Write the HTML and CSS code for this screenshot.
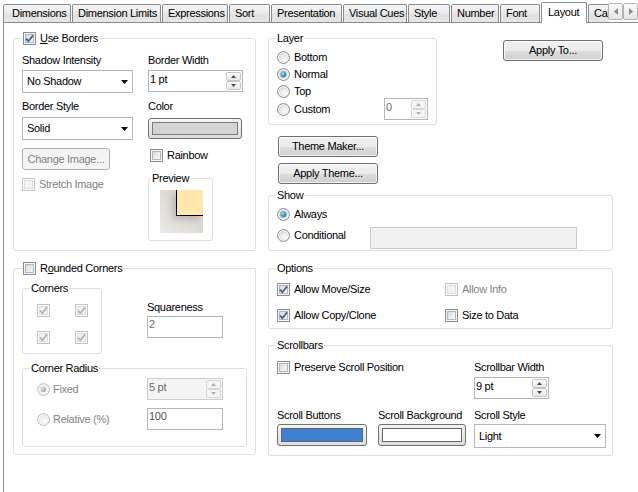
FILE: index.html
```html
<!DOCTYPE html>
<html>
<head>
<meta charset="utf-8">
<title>Layout</title>
<link rel="stylesheet" href="styles.css">
</head>
<body>
<div class="tabbar">
  <div class="tabs">
    <div class="tab t-dim">Dimensions</div>
    <div class="tab t-lim">Dimension Limits</div>
    <div class="tab t-exp">Expressions</div>
    <div class="tab t-sort">Sort</div>
    <div class="tab t-pres">Presentation</div>
    <div class="tab t-vc">Visual Cues</div>
    <div class="tab t-style">Style</div>
    <div class="tab t-num">Number</div>
    <div class="tab t-font">Font</div>
    <div class="tab active t-lay">Layout</div>
    <div class="tab t-cap">Caption</div>
  </div>
  <div class="tabscroll">
    <div class="sbtn"><svg width="4" height="7" viewBox="0 0 4 7"><path d="M4 0V7L0 3.5Z" fill="#8a8a8a"/></svg></div>
    <div class="sbtn"><svg width="4" height="7" viewBox="0 0 4 7"><path d="M0 0V7L4 3.5Z" fill="#8a8a8a"/></svg></div>
  </div>
</div>

<div class="panel">
  <div class="col col-left">
    <div class="group g-borders">
      <div class="legend chk"><span class="cb"><svg width="11" height="11" viewBox="0 0 11 11"><path d="M2 5.6L4.4 8.2L9 2.4" class="tick"/></svg></span><span><u>U</u>se Borders</span></div>
      <div class="ub-body">
        <div class="ub-col1">
          <div class="lbl">Shadow Intensity</div>
          <div class="select sel-shadow"><span>No Shadow</span><svg class="arrow" width="7" height="4" viewBox="0 0 7 4"><path d="M0 0H7L3.5 4Z"/></svg></div>
          <div class="lbl lbl-style">Border Style</div>
          <div class="select sel-style"><span>Solid</span><svg class="arrow" width="7" height="4" viewBox="0 0 7 4"><path d="M0 0H7L3.5 4Z"/></svg></div>
          <div class="btn dis btn-change">Change Image...</div>
          <div class="check dis chk-stretch"><span class="cb dis"></span>Stretch Image</div>
        </div>
        <div class="ub-col2">
          <div class="lbl">Border Width</div>
          <div class="spin spin-bw">
            <span class="val">1 pt</span>
            <span class="spbtns">
              <span class="sb"><svg width="5" height="3" viewBox="0 0 5 3"><path d="M0 3H5L2.5 0Z"/></svg></span>
              <span class="sb"><svg width="5" height="3" viewBox="0 0 5 3"><path d="M0 0H5L2.5 3Z"/></svg></span>
            </span>
          </div>
          <div class="lbl lbl-color">Color</div>
          <div class="colorbtn color-border"><div class="sw sw-gray"></div></div>
          <div class="check chk-rainbow"><span class="cb"></span>Rainbow</div>
          <div class="group g-preview">
            <div class="legend lg-preview">Preview</div>
            <div class="pv-img"><div class="pv-square"></div></div>
          </div>
        </div>
      </div>
    </div>

    <div class="group g-rounded">
      <div class="legend chk"><span class="cb"></span><span>R<u>o</u>unded Corners</span></div>
      <div class="rc-top">
        <div class="group g-corners">
          <div class="legend">Corners</div>
          <div class="corner-grid">
            <span class="cb dis"><svg width="11" height="11" viewBox="0 0 11 11"><path d="M2 5.6L4.4 8.2L9 2.4" class="tick"/></svg></span>
            <span class="cb dis"><svg width="11" height="11" viewBox="0 0 11 11"><path d="M2 5.6L4.4 8.2L9 2.4" class="tick"/></svg></span>
            <span class="cb dis"><svg width="11" height="11" viewBox="0 0 11 11"><path d="M2 5.6L4.4 8.2L9 2.4" class="tick"/></svg></span>
            <span class="cb dis"><svg width="11" height="11" viewBox="0 0 11 11"><path d="M2 5.6L4.4 8.2L9 2.4" class="tick"/></svg></span>
          </div>
        </div>
        <div class="sq-col">
          <div class="lbl">Squareness</div>
          <div class="input sq-input">2</div>
        </div>
      </div>
      <div class="group g-radius">
        <div class="legend">Corner Radius</div>
        <div class="rad-row r-fixed">
          <div class="radio dis"><span class="rb on dis"></span>Fixed</div>
          <div class="spin dis spin-r">
            <span class="val">5 pt</span>
            <span class="spbtns">
              <span class="sb"><svg width="5" height="3" viewBox="0 0 5 3"><path d="M0 3H5L2.5 0Z"/></svg></span>
              <span class="sb"><svg width="5" height="3" viewBox="0 0 5 3"><path d="M0 0H5L2.5 3Z"/></svg></span>
            </span>
          </div>
        </div>
        <div class="rad-row r-rel">
          <div class="radio dis"><span class="rb dis"></span>Relative (%)</div>
          <div class="input rel-input">100</div>
        </div>
      </div>
    </div>
  </div>

  <div class="col col-right">
    <div class="top-row">
      <div class="group g-layer">
        <div class="legend">Layer</div>
        <div class="layer-list">
          <div class="radio lrow"><span class="rb"></span>Bottom</div>
          <div class="radio lrow"><span class="rb on"></span>Normal</div>
          <div class="radio lrow"><span class="rb"></span>Top</div>
          <div class="lrow-custom">
            <div class="radio"><span class="rb"></span>Custom</div>
            <div class="spin dis spin-custom">
              <span class="val">0</span>
              <span class="spbtns">
                <span class="sb"><svg width="5" height="3" viewBox="0 0 5 3"><path d="M0 3H5L2.5 0Z"/></svg></span>
                <span class="sb"><svg width="5" height="3" viewBox="0 0 5 3"><path d="M0 0H5L2.5 3Z"/></svg></span>
              </span>
            </div>
          </div>
        </div>
      </div>
      <div class="btn btn-apply">Apply To...</div>
    </div>
    <div class="btn btn-theme">Theme Maker...</div>
    <div class="btn btn-theme2">Apply Theme...</div>

    <div class="group g-show">
      <div class="legend">Show</div>
      <div class="radio show-always"><span class="rb on"></span>Always</div>
      <div class="show-cond">
        <div class="radio"><span class="rb"></span>Conditional</div>
        <div class="cond-input"></div>
      </div>
    </div>

    <div class="group g-options">
      <div class="legend">Options</div>
      <div class="opt-grid">
        <div class="check"><span class="cb"><svg width="11" height="11" viewBox="0 0 11 11"><path d="M2 5.6L4.4 8.2L9 2.4" class="tick"/></svg></span>Allow Move/Size</div>
        <div class="check dis"><span class="cb dis"></span>Allow Info</div>
        <div class="check"><span class="cb"><svg width="11" height="11" viewBox="0 0 11 11"><path d="M2 5.6L4.4 8.2L9 2.4" class="tick"/></svg></span>Allow Copy/Clone</div>
        <div class="check"><span class="cb"></span>Size to Data</div>
      </div>
    </div>

    <div class="group g-scroll">
      <div class="legend">Scrollbars</div>
      <div class="scroll-grid">
        <div class="check preserve"><span class="cb"></span>Preserve Scroll Position</div>
        <div class="cell">
          <div class="lbl">Scrollbar Width</div>
          <div class="spin spin-sw">
            <span class="val">9 pt</span>
            <span class="spbtns">
              <span class="sb"><svg width="5" height="3" viewBox="0 0 5 3"><path d="M0 3H5L2.5 0Z"/></svg></span>
              <span class="sb"><svg width="5" height="3" viewBox="0 0 5 3"><path d="M0 0H5L2.5 3Z"/></svg></span>
            </span>
          </div>
        </div>
        <div class="cell">
          <div class="lbl">Scroll Buttons</div>
          <div class="colorbtn cb-buttons"><div class="sw sw-blue"></div></div>
        </div>
        <div class="cell">
          <div class="lbl">Scroll Background</div>
          <div class="colorbtn cb-bg"><div class="sw sw-white"></div></div>
        </div>
        <div class="cell">
          <div class="lbl">Scroll Style</div>
          <div class="select sel-scroll"><span>Light</span><svg class="arrow" width="7" height="4" viewBox="0 0 7 4"><path d="M0 0H7L3.5 4Z"/></svg></div>
        </div>
      </div>
    </div>
  </div>
</div>
</body>
</html>
```

FILE: styles.css
```css
* { box-sizing: border-box; }

html, body {
  margin: 0;
  background: #fff;
}

body {
  width: 638px;
  height: 492px;
  overflow: hidden;
  font-family: "Liberation Sans", Arial, sans-serif;
  font-size: 11px;
  line-height: 13px;
  letter-spacing: -0.3px;
  color: #000;
}

/* ---------- tabs ---------- */
.tabbar {
  display: flex;
  align-items: flex-start;
  height: 22px;
}

.tabs {
  display: flex;
  align-items: flex-end;
  flex: none;
  width: 608px;
  height: 23px;
  padding-left: 3px;
  overflow: hidden;
  position: relative;
  z-index: 1;
}

.tab {
  flex: none;
  height: 18px;
  margin: 0 1px 1px 0;
  padding-left: 5px;
  border: 1px solid #898c95;
  border-bottom: none;
  border-radius: 2px 2px 0 0;
  background: linear-gradient(#f7f7f7, #e9e9e9 50%, #e1e1e1 51%, #e6e6e6);
  line-height: 17px;
  white-space: nowrap;
}

.tab.active {
  height: 21px;
  margin-bottom: 0;
  padding-left: 6px;
  background: #fff;
  line-height: 18px;
}

.t-dim { width: 68px; padding-left: 8px; }
.t-lim { width: 89px; }
.t-exp { width: 66px; }
.t-sort { width: 41px; }
.t-pres { width: 71px; }
.t-vc { width: 64px; }
.t-style { width: 42px; }
.t-num { width: 48px; }
.t-font { width: 40px; }
.t-lay { width: 46px; }
.t-cap { width: 50px; }

.tabscroll {
  display: flex;
  margin-top: 3px;
}

.sbtn {
  width: 15px;
  height: 17px;
  border: 1px solid #b4b4b4;
  border-radius: 2px;
  background: linear-gradient(#fafafa, #e6e6e6);
  display: flex;
  align-items: center;
  justify-content: center;
}

/* ---------- panel ---------- */
.panel {
  display: flex;
  gap: 12px;
  margin-left: 3px;
  height: 470px;
  padding: 15px 0 0 9px;
  border-left: 1px solid #898c95;
  border-top: 1px solid #898c95;
}

.col {
  flex: none;
  display: flex;
  flex-direction: column;
}

.col-left { width: 243px; }
.col-right { width: 345px; }

/* ---------- group boxes ---------- */
.group {
  border: 1px solid #d5dfe5;
  border-radius: 3px;
}

.legend {
  display: flex;
  align-items: center;
  gap: 4px;
  width: max-content;
  height: 13px;
  margin: -7px 0 0 7px;
  padding: 0 1px;
  background: #fff;
  white-space: nowrap;
}

.legend.chk { margin-left: 8px; }

.lbl {
  height: 13px;
  white-space: nowrap;
}

/* ---------- checkbox ---------- */
.cb {
  flex: none;
  width: 13px;
  height: 13px;
  border: 1px solid #8e8f8f;
  background: linear-gradient(135deg, #cbcfd4, #eceef0 55%, #fbfbfb);
  box-shadow: inset 0 0 0 1px #f4f4f4, inset 0 0 0 2px #b3b7bc;
  display: flex;
  align-items: center;
  justify-content: center;
}

.cb svg { display: block; }

.tick {
  fill: none;
  stroke: #4a5e93;
  stroke-width: 1.8;
}

.cb.dis {
  border-color: #c4c4c4;
  background: #f3f3f3;
  box-shadow: inset 0 0 0 1px #fbfbfb, inset 0 0 0 2px #dedede;
}

.cb.dis .tick { stroke: #b4b4b4; }

.check {
  display: flex;
  align-items: center;
  gap: 4px;
  height: 13px;
  white-space: nowrap;
}

.check.dis, .radio.dis { color: #838383; }

/* ---------- radio ---------- */
.radio {
  display: flex;
  align-items: center;
  gap: 4px;
  white-space: nowrap;
}

.rb {
  flex: none;
  width: 13px;
  height: 13px;
  border-radius: 50%;
  border: 1px solid #8e8f8f;
  background: radial-gradient(circle at 62% 65%, #fbfbfb 0%, #e6e6e6 45%, #c9cbcd 90%);
  box-shadow: inset 0 0 0 1px #f2f2f2;
  display: flex;
  align-items: center;
  justify-content: center;
}

.rb.on::after {
  content: "";
  width: 5px;
  height: 5px;
  border-radius: 50%;
  background: radial-gradient(circle at 38% 35%, #a6ecfb 0%, #2a93c4 50%, #0c4c75 100%);
  box-shadow: 0 0 0 1px rgba(20, 80, 120, 0.35);
}

.rb.dis {
  border-color: #c2c2c2;
  background: radial-gradient(circle at 62% 65%, #fbfbfb, #ececec 60%, #dddddd);
}

.rb.on.dis::after {
  background: radial-gradient(circle at 38% 35%, #e8e8e8, #a9a9a9 60%, #8f8f8f);
  box-shadow: none;
}

/* ---------- buttons ---------- */
.btn {
  height: 21px;
  border: 1px solid #707070;
  border-radius: 3px;
  background: linear-gradient(#f2f2f2 0%, #ebebeb 50%, #dddddd 51%, #cfcfcf 100%);
  box-shadow: inset 0 0 0 1px rgba(255, 255, 255, 0.7);
  display: flex;
  align-items: center;
  justify-content: center;
  white-space: nowrap;
}

.btn.dis {
  border-color: #adb2b5;
  background: #f4f4f4;
  box-shadow: none;
  color: #838383;
}

/* ---------- inputs ---------- */
.select {
  display: flex;
  align-items: center;
  height: 23px;
  padding: 0 4px 0 4px;
  border: 1px solid #b3b6ba;
  background: #fff;
}

.select .arrow {
  margin-left: auto;
  fill: #000;
}

.spin {
  display: flex;
  height: 22px;
  border: 1px solid #b3b6ba;
  background: #fff;
}

.spin .val {
  flex: 1;
  padding: 2px 0 0 1px;
}

.spbtns {
  display: flex;
  flex-direction: column;
  width: 16px;
  padding: 1px 1px 1px 0;
}

.sb {
  flex: 1;
  border: 1px solid #c3c6ca;
  border-radius: 2px;
  background: linear-gradient(#fcfcfc, #e8e8e8);
  display: flex;
  align-items: center;
  justify-content: center;
}

.sb svg { fill: #4b4b4b; display: block; }

.spin.dis .val { color: #6d6d6d; }
.spin.dis .sb { border-color: #d6d8db; background: #f5f5f5; }
.spin.dis .sb svg { fill: #b0b0b0; }

.input {
  height: 22px;
  padding: 1px 0 0 1px;
  border: 1px solid #b3b6ba;
  background: #fff;
  color: #6d6d6d;
}

.colorbtn {
  border: 1px solid #707070;
  border-radius: 3px;
  background: linear-gradient(#f4f4f4, #dedede);
  padding: 3px;
}

.sw {
  height: 100%;
  border: 1px solid #666;
}

.sw-gray { background: #d4d4d4; border-color: #7c7c7c; }
.sw-blue { background: #3c7fd3; }
.sw-white { background: #fff; }

/* ---------- Use Borders group ---------- */
.g-borders { height: 213px; }

.ub-body {
  display: flex;
  gap: 15px;
  padding: 9px 0 0 8px;
}

.ub-col1 {
  width: 111px;
  display: flex;
  flex-direction: column;
}

.ub-col2 {
  width: 95px;
  display: flex;
  flex-direction: column;
  align-items: flex-start;
}

.sel-shadow { margin-top: 3px; }
.lbl-style { margin-top: 7px; }
.sel-style { margin-top: 4px; }
.btn-change { margin-top: 8px; width: 88px; height: 22px; }
.chk-stretch { margin-top: 8px; }

.spin-bw { margin-top: 3px; width: 95px; }
.lbl-color { margin-top: 8px; }
.color-border { margin-top: 5px; width: 94px; height: 21px; }
.chk-rainbow { margin: 10px 0 0 2px; }

.g-preview {
  width: 65px;
  height: 63px;
  margin-top: 16px;
}

.lg-preview { margin-left: 2px; }

.pv-img {
  width: 43px;
  height: 43px;
  margin: 5px 0 0 11px;
  background: linear-gradient(45deg, #ebe9e6 0%, #dcd9d5 60%, #d2cfca 100%);
  overflow: hidden;
}

.pv-square {
  width: 27px;
  height: 26px;
  margin-left: 16px;
  background: #ffe7ad;
  border-left: 1px solid #000;
  border-bottom: 1px solid #000;
  box-shadow: -4px 4px 6px rgba(80, 70, 60, 0.22);
}

/* ---------- Rounded Corners group ---------- */
.g-rounded {
  height: 187px;
  margin-top: 17px;
}

.rc-top {
  display: flex;
  margin: 13px 0 0 8px;
}

.g-corners {
  flex: none;
  width: 80px;
  height: 66px;
}

.corner-grid {
  display: grid;
  grid-template-columns: 13px 13px;
  column-gap: 25px;
  row-gap: 14px;
  margin: 9px 0 0 14px;
}

.sq-col { margin: 13px 0 0 45px; }
.sq-input { width: 76px; margin-top: 2px; }

.g-radius {
  width: 225px;
  height: 79px;
  margin: 14px 0 0 8px;
}

.rad-row {
  display: flex;
  align-items: center;
  height: 22px;
  padding-left: 14px;
}

.rad-row .radio { width: 110px; gap: 3px; }
.r-fixed { margin-top: 3px; }
.r-rel { margin-top: 8px; }

.spin-r { width: 76px; }
.spin-r.dis { background: #f4f4f4; border-color: #ccd0d4; }
.rel-input { width: 76px; color: #555; }

/* ---------- right column ---------- */
.top-row {
  display: flex;
  align-items: flex-start;
}

.g-layer {
  flex: none;
  width: 169px;
  height: 87px;
}

.layer-list {
  margin-top: 4px;
  padding: 0 8px;
}

.lrow { height: 17px; }

.lrow-custom {
  display: flex;
  align-items: center;
  justify-content: space-between;
  height: 22px;
  margin-top: -2px;
}

.spin-custom { width: 44px; }

.btn-apply {
  flex: none;
  width: 100px;
  margin: 2px 0 0 66px;
}

.btn-theme { width: 100px; margin: 11px 0 0 10px; }
.btn-theme2 { width: 100px; margin: 6px 0 0 10px; }

.g-show {
  height: 56px;
  margin-top: 11px;
}

.show-always {
  height: 13px;
  margin: 6px 0 0 8px;
}

.show-cond {
  display: flex;
  align-items: flex-start;
  height: 22px;
  margin: 6px 0 0 8px;
}

.show-cond .radio {
  width: 93px;
  height: 13px;
  margin-top: 2px;
}

.cond-input {
  width: 207px;
  height: 22px;
  border: 1px solid #c8cbcf;
  background: #f0f0f0;
}

.g-options {
  height: 61px;
  margin-top: 17px;
}

.opt-grid {
  display: grid;
  grid-template-columns: 168px 1fr;
  row-gap: 13px;
  margin: 8px 0 0 8px;
}

.g-scroll {
  height: 111px;
  margin-top: 16px;
}

.scroll-grid {
  display: grid;
  grid-template-columns: 101px 96px 132px;
  row-gap: 10px;
  margin: 9px 0 0 8px;
}

.preserve { grid-column: 1 / span 2; }

.spin-sw { width: 75px; margin-top: 3px; }

.cb-buttons { width: 90px; height: 22px; margin-top: 2px; }
.cb-bg { width: 88px; height: 22px; margin-top: 2px; }
.sel-scroll { width: 132px; height: 24px; margin-top: 2px; }
```
